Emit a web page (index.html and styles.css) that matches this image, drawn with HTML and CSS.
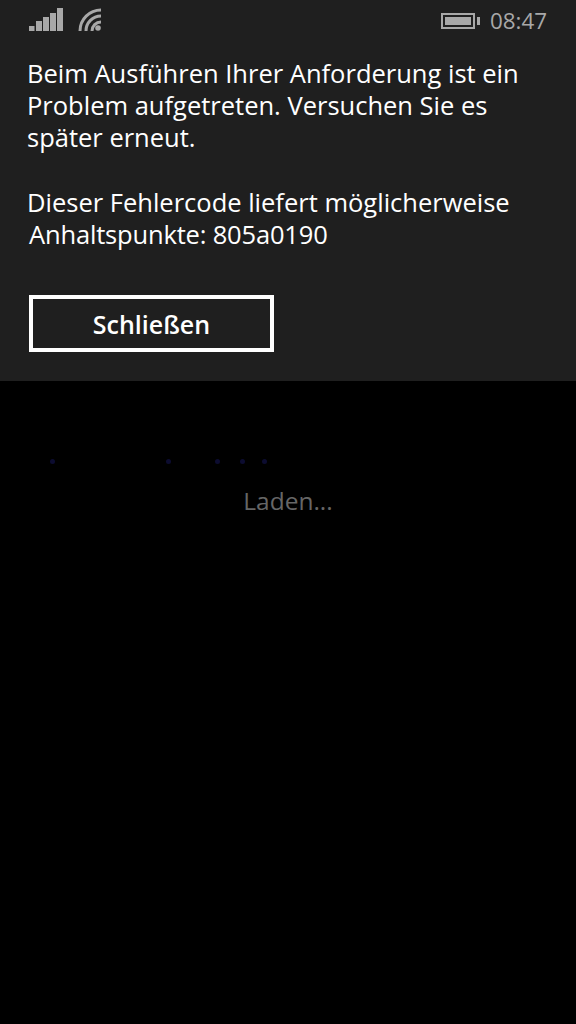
FILE: index.html
```html
<!DOCTYPE html>
<html lang="de">
<head>
<meta charset="utf-8">
<title>Fehler</title>
<link rel="stylesheet" href="styles.css">
</head>
<body>
<section class="panel">
  <header class="status">
    <div class="status-left">
      <svg class="signal" width="34" height="23" viewBox="0 0 34 23"><rect x="0" y="18" width="5.500" height="5"/><rect x="7" y="13" width="6" height="10"/><rect x="14" y="9" width="6" height="14"/><rect x="21" y="5" width="6" height="18"/><rect x="28" y="0" width="6" height="23"/></svg>
      <svg class="wifi" width="23" height="23" viewBox="0 0 23 23"><circle cx="20" cy="20" r="2.800" fill="#a8a8a8"/><g fill="none" stroke="#a8a8a8" stroke-width="3"><path d="M14 23a9 9 0 0 1 9-9"/><path d="M8 23a15 15 0 0 1 15-15"/><path d="M2 23a21 21 0 0 1 21-21"/></g></svg>
    </div>
    <div class="status-right">
      <div class="battery"><div class="battery-body"><div class="battery-fill"></div></div><div class="battery-tip"></div></div>
      <span class="clock">08:47</span>
    </div>
  </header>
  <p class="message">Beim Ausführen Ihrer Anforderung ist ein Problem aufgetreten. Versuchen Sie es später erneut.</p>
  <p class="message code">Dieser Fehlercode liefert möglicherweise<span class="code-line">Anhaltspunkte: 805a0190</span></p>
  <button class="close">Schließen</button>
</section>
<main class="loading">
  <div class="dots"><i class="dot d1"></i><i class="dot d2"></i><i class="dot d3"></i><i class="dot d4"></i><i class="dot d5"></i></div>
  <p class="loading-text">Laden...</p>
</main>
</body>
</html>
```
FILE: styles.css
```css
* { box-sizing: border-box; }
html, body { margin: 0; height: 100%; background: #000; }
body { width: 576px; height: 1024px; overflow: hidden; font-family: "Open Sans", "Noto Sans", sans-serif; }
.panel { height: 381px; background: #1f1f1f; padding: 0 29px 0 27px; display: flow-root; }
.status { display: flex; justify-content: space-between; align-items: flex-start; height: 57px; }
.status-left { display: flex; gap: 15px; padding: 8px 0 0 2px; }
.signal rect { fill: #a8a8a8; }
.status-right { display: flex; align-items: center; gap: 10px; height: 41px; }
.battery { display: flex; align-items: center; gap: 2px; }
.battery-body { width: 34px; height: 16px; border: 2px solid #a8a8a8; padding: 2px; }
.battery-fill { height: 100%; background: #a8a8a8; width: 26px; }
.battery-tip { width: 3px; height: 8px; background: #a8a8a8; }
.clock { color: #a8a8a8; font-size: 22.400px; line-height: 40px; }
.message { margin: 0; color: #fff; font-size: 25.500px; line-height: 32px; }
.code { margin-top: 33px; }
.code-line { display: block; padding-left: 2px; letter-spacing: -0.17px; }
.close { display: block; margin: 45px 0 0 2px; width: 245px; height: 57px; background: transparent; border: 4px solid #fff; color: #fff; font: 600 25px "Open Sans", "Noto Sans", sans-serif; padding: 0; }
.loading { display: flow-root; height: 643px; position: relative; }
.dots { position: relative; height: 10px; margin-top: 76px; }
.dot { position: absolute; top: 1.500px; width: 5px; height: 5px; border-radius: 50%; background: #0c0c30; }
.d1 { left: 49.500px; } .d2 { left: 165.500px; } .d3 { left: 214.500px; } .d4 { left: 239.500px; } .d5 { left: 261.500px; }
.loading-text { margin: 18px 0 0; text-align: center; color: #666; font-size: 24.500px; line-height: 32px; }
```
